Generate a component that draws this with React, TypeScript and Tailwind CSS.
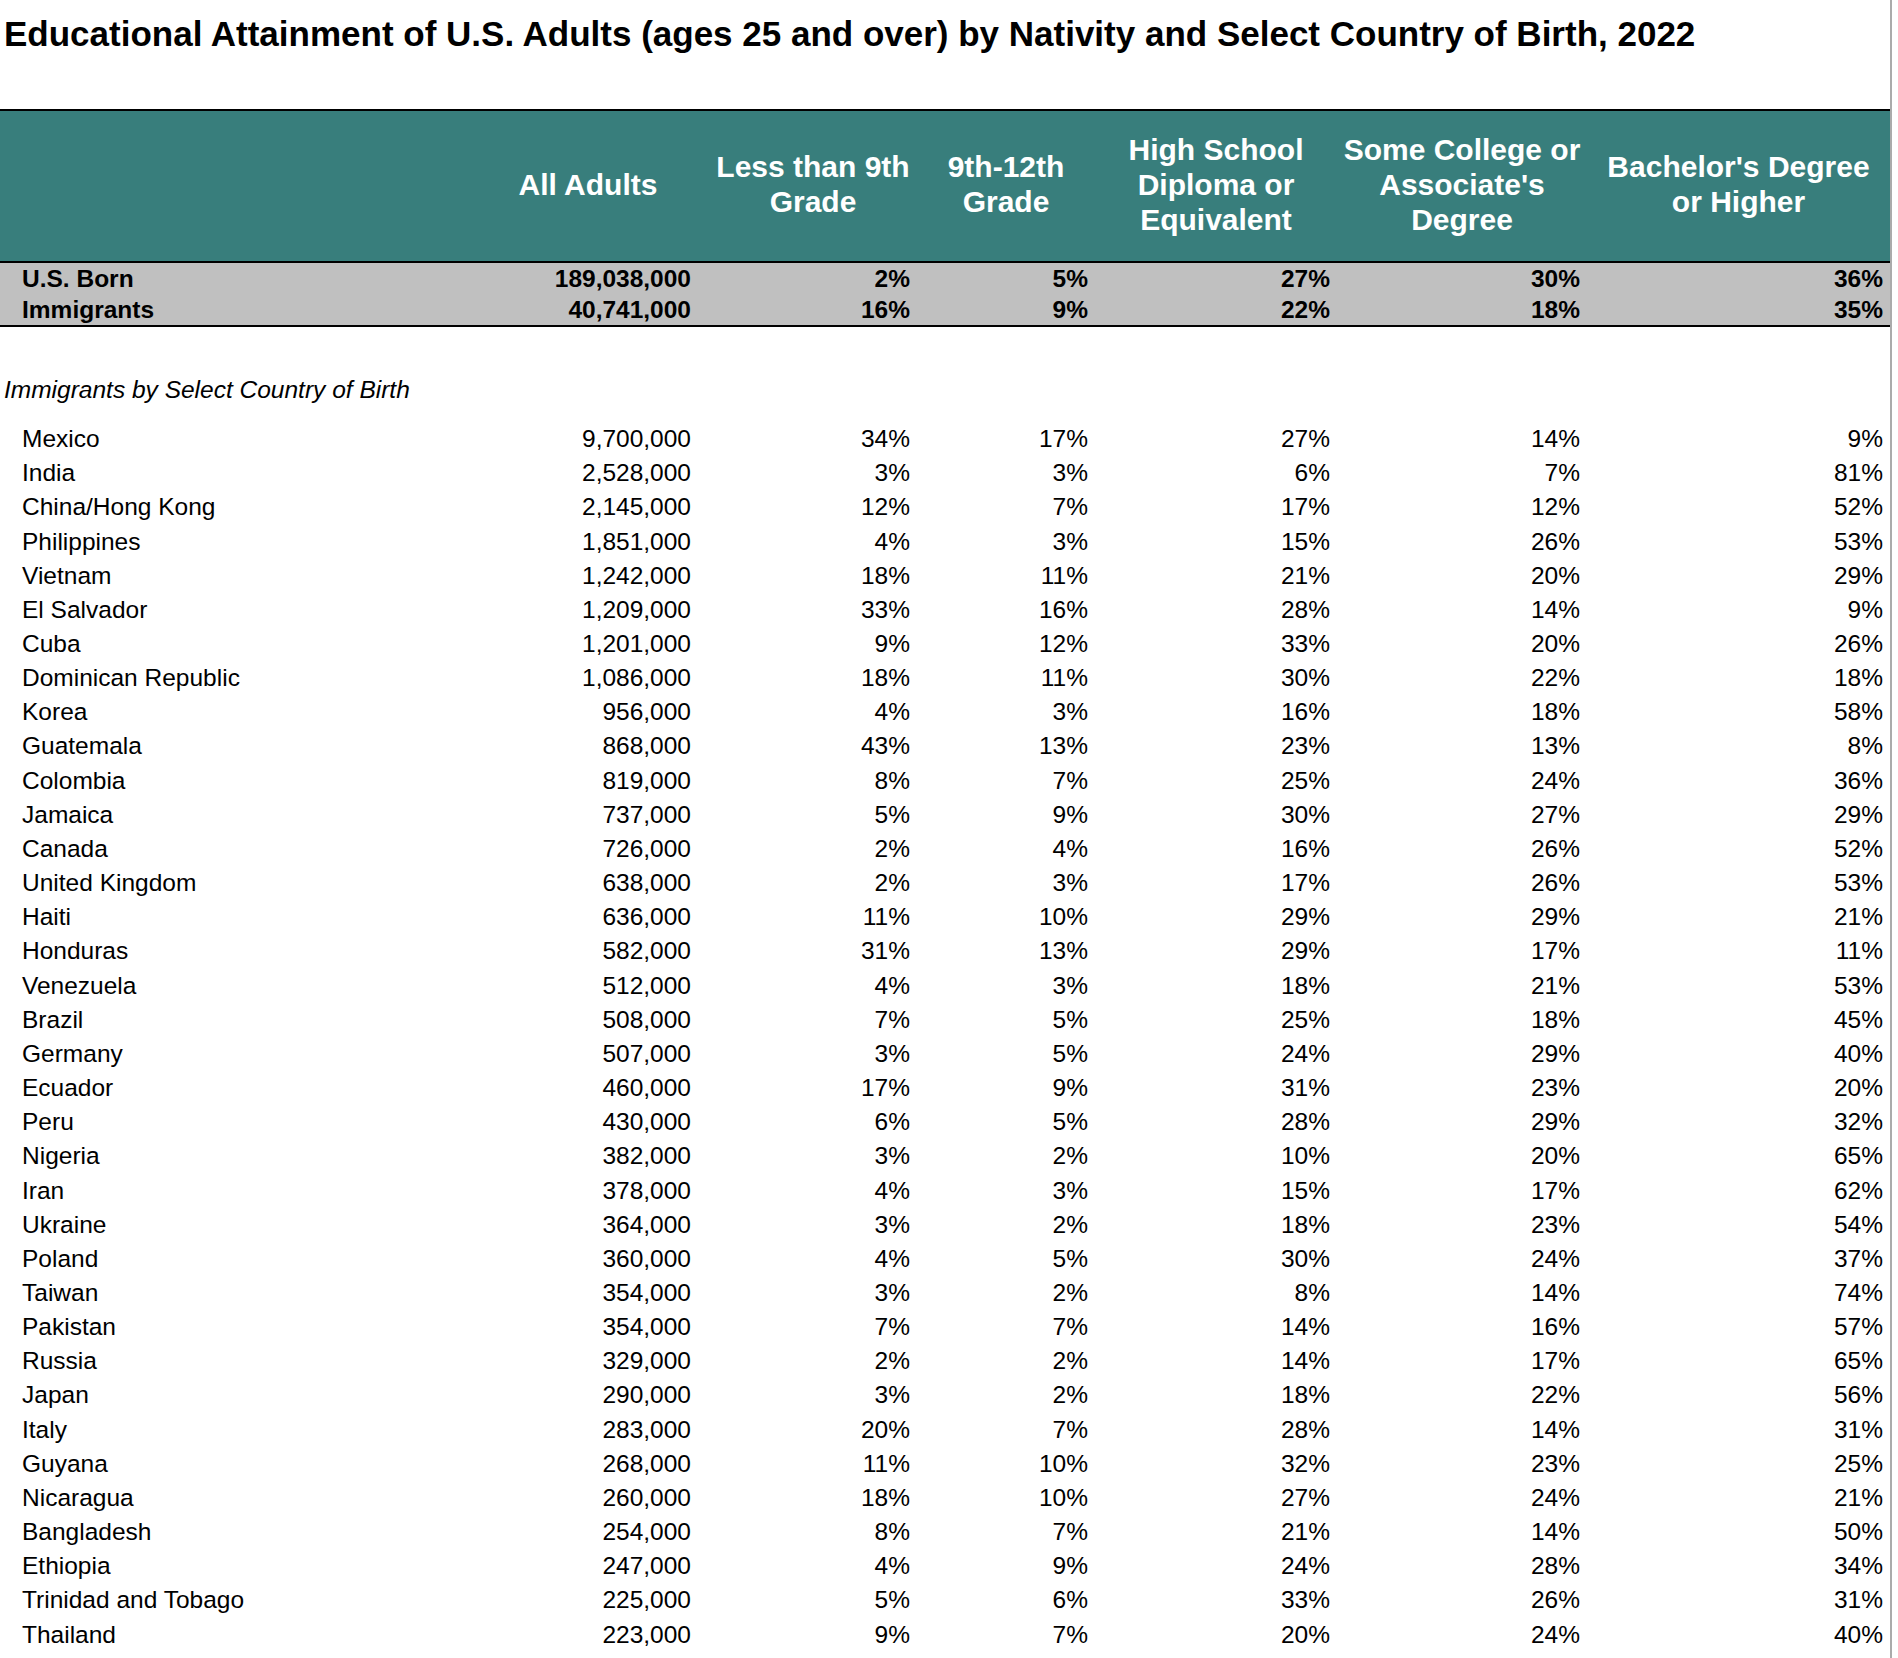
const headers = [
  ['All Adults'],
  ['Less than 9th', 'Grade'],
  ['9th-12th', 'Grade'],
  ['High School', 'Diploma or', 'Equivalent'],
  ['Some College or', "Associate's", 'Degree'],
  ["Bachelor's Degree", 'or Higher'],
];

const totals: [string, string, string, string, string, string, string][] = [
  ['U.S. Born', '189,038,000', '2%', '5%', '27%', '30%', '36%'],
  ['Immigrants', '40,741,000', '16%', '9%', '22%', '18%', '35%'],
];

const countries: [string, string, string, string, string, string, string][] = [
  ['Mexico', '9,700,000', '34%', '17%', '27%', '14%', '9%'],
  ['India', '2,528,000', '3%', '3%', '6%', '7%', '81%'],
  ['China/Hong Kong', '2,145,000', '12%', '7%', '17%', '12%', '52%'],
  ['Philippines', '1,851,000', '4%', '3%', '15%', '26%', '53%'],
  ['Vietnam', '1,242,000', '18%', '11%', '21%', '20%', '29%'],
  ['El Salvador', '1,209,000', '33%', '16%', '28%', '14%', '9%'],
  ['Cuba', '1,201,000', '9%', '12%', '33%', '20%', '26%'],
  ['Dominican Republic', '1,086,000', '18%', '11%', '30%', '22%', '18%'],
  ['Korea', '956,000', '4%', '3%', '16%', '18%', '58%'],
  ['Guatemala', '868,000', '43%', '13%', '23%', '13%', '8%'],
  ['Colombia', '819,000', '8%', '7%', '25%', '24%', '36%'],
  ['Jamaica', '737,000', '5%', '9%', '30%', '27%', '29%'],
  ['Canada', '726,000', '2%', '4%', '16%', '26%', '52%'],
  ['United Kingdom', '638,000', '2%', '3%', '17%', '26%', '53%'],
  ['Haiti', '636,000', '11%', '10%', '29%', '29%', '21%'],
  ['Honduras', '582,000', '31%', '13%', '29%', '17%', '11%'],
  ['Venezuela', '512,000', '4%', '3%', '18%', '21%', '53%'],
  ['Brazil', '508,000', '7%', '5%', '25%', '18%', '45%'],
  ['Germany', '507,000', '3%', '5%', '24%', '29%', '40%'],
  ['Ecuador', '460,000', '17%', '9%', '31%', '23%', '20%'],
  ['Peru', '430,000', '6%', '5%', '28%', '29%', '32%'],
  ['Nigeria', '382,000', '3%', '2%', '10%', '20%', '65%'],
  ['Iran', '378,000', '4%', '3%', '15%', '17%', '62%'],
  ['Ukraine', '364,000', '3%', '2%', '18%', '23%', '54%'],
  ['Poland', '360,000', '4%', '5%', '30%', '24%', '37%'],
  ['Taiwan', '354,000', '3%', '2%', '8%', '14%', '74%'],
  ['Pakistan', '354,000', '7%', '7%', '14%', '16%', '57%'],
  ['Russia', '329,000', '2%', '2%', '14%', '17%', '65%'],
  ['Japan', '290,000', '3%', '2%', '18%', '22%', '56%'],
  ['Italy', '283,000', '20%', '7%', '28%', '14%', '31%'],
  ['Guyana', '268,000', '11%', '10%', '32%', '23%', '25%'],
  ['Nicaragua', '260,000', '18%', '10%', '27%', '24%', '21%'],
  ['Bangladesh', '254,000', '8%', '7%', '21%', '14%', '50%'],
  ['Ethiopia', '247,000', '4%', '9%', '24%', '28%', '34%'],
  ['Trinidad and Tobago', '225,000', '5%', '6%', '33%', '26%', '31%'],
  ['Thailand', '223,000', '9%', '7%', '20%', '24%', '40%'],
];

const cols = 'grid grid-cols-[467px_242px_208px_178px_242px_250px_303px]';

const Row = ({ cells, className }: { cells: string[]; className: string }) => (
  <div className={`${cols} items-center ${className}`}>
    <div className="pl-[22px] whitespace-nowrap">{cells[0]}</div>
    <div className="text-right pr-[18px]">{cells[1]}</div>
    {cells.slice(2).map((c, i) => (
      <div key={i} className="text-right pr-[7px]">
        {c}
      </div>
    ))}
  </div>
);

export default function App() {
  return (
    <div className="w-[1898px] min-h-[1658px] bg-white text-black font-['Liberation_Sans',Arial,sans-serif]">
      <div className="w-[1892px] min-h-[1658px] border-r-2 border-[#ababab]">
        <div className="h-[109px] pt-[14px] pl-[4px]">
          <h1 className="text-[35px] leading-[40px] font-bold whitespace-nowrap">
            Educational Attainment of U.S. Adults (ages 25 and over) by Nativity and Select Country of Birth, 2022
          </h1>
        </div>

        {/* header band */}
        <div className={`${cols} h-[154px] border-y-2 border-black bg-[#387e7c] text-white font-bold text-[30px] leading-[35px]`}>
          <div />
          {headers.map((lines, i) => (
            <div key={i} className="flex flex-col items-center justify-center pb-[4px] text-center whitespace-nowrap">
              {lines.map((l) => (
                <span key={l}>{l}</span>
              ))}
            </div>
          ))}
        </div>

        {/* totals */}
        <div className="bg-[#c0c0c0] border-b-2 border-black font-bold text-[24.5px] leading-[28px]">
          {totals.map((r) => (
            <Row key={r[0]} cells={r} className="h-[31px]" />
          ))}
        </div>

        <div className="mt-[46px] h-[34px] flex items-center pl-[4px] italic text-[24.5px]">
          Immigrants by Select Country of Birth
        </div>

        <div className="mt-[15px] text-[24.5px] leading-[28px]">
          {countries.map((r) => (
            <Row key={r[0]} cells={r} className="h-[34.17px]" />
          ))}
        </div>
      </div>
    </div>
  );
}
